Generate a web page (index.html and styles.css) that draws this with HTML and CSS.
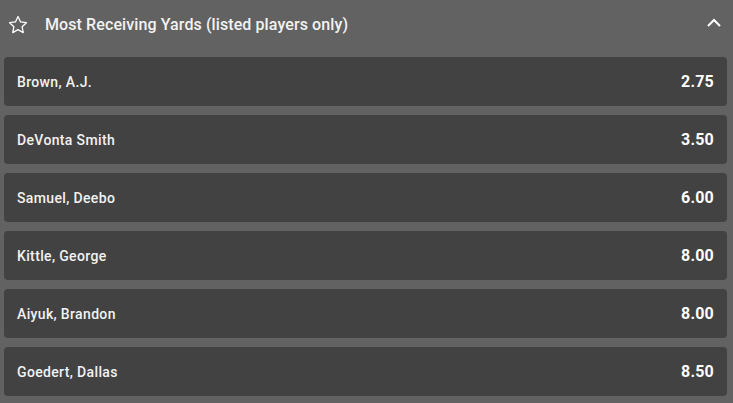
FILE: index.html
```html
<!DOCTYPE html>
<html>
<head>
<meta charset="utf-8">
<link rel="stylesheet" href="styles.css">
</head>
<body>
<div class="market">
  <div class="header">
    <svg class="star" width="22" height="22" viewBox="0 0 24 24"><path d="M12 2.8l2.8 5.9 6.4.8-4.7 4.4 1.2 6.4L12 17.1l-5.7 3.2 1.2-6.4-4.7-4.4 6.4-.8z" fill="none" stroke="#fff" stroke-width="1.4" stroke-linejoin="round"/></svg>
    <span class="title">Most Receiving Yards (listed players only)</span>
    <svg class="chev" width="14" height="9" viewBox="0 0 14 9"><path d="M1 8L7 2l6 6" fill="none" stroke="#fff" stroke-width="2"/></svg>
  </div>
  <div class="rows">
    <div class="row"><span class="name">Brown, A.J.</span><span class="odds">2.75</span></div>
    <div class="row"><span class="name">DeVonta Smith</span><span class="odds">3.50</span></div>
    <div class="row"><span class="name">Samuel, Deebo</span><span class="odds">6.00</span></div>
    <div class="row"><span class="name">Kittle, George</span><span class="odds">8.00</span></div>
    <div class="row"><span class="name">Aiyuk, Brandon</span><span class="odds">8.00</span></div>
    <div class="row"><span class="name">Goedert, Dallas</span><span class="odds">8.50</span></div>
  </div>
</div>
</body>
</html>
```
FILE: styles.css
```css
html, body { margin: 0; padding: 0; }
body { background: #626262; font-family: Roboto, "Liberation Sans", sans-serif; color: #f2f2f2; width: 733px; height: 403px; overflow: hidden; }
.market { padding: 0 6px 0 4px; }
.header { height: 57px; display: flex; align-items: center; padding-left: 3px; box-sizing: border-box; padding-bottom: 10px; padding-top: 2px; }
.star { flex: none; }
.title { margin-left: 16px; font-size: 16px; font-weight: 500; letter-spacing: 0.1px; flex: 1; }
.chev { margin-right: 6px; margin-bottom: 4px; }
.rows { display: flex; flex-direction: column; gap: 9px; }
.row { height: 49px; background: #424242; border-radius: 4px; display: flex; align-items: center; justify-content: space-between; padding: 0 13px; }
.name { font-size: 14px; font-weight: 500; letter-spacing: 0.35px; }
.odds { font-size: 16px; font-weight: 700; color: #fff; letter-spacing: 0.2px; }
```
